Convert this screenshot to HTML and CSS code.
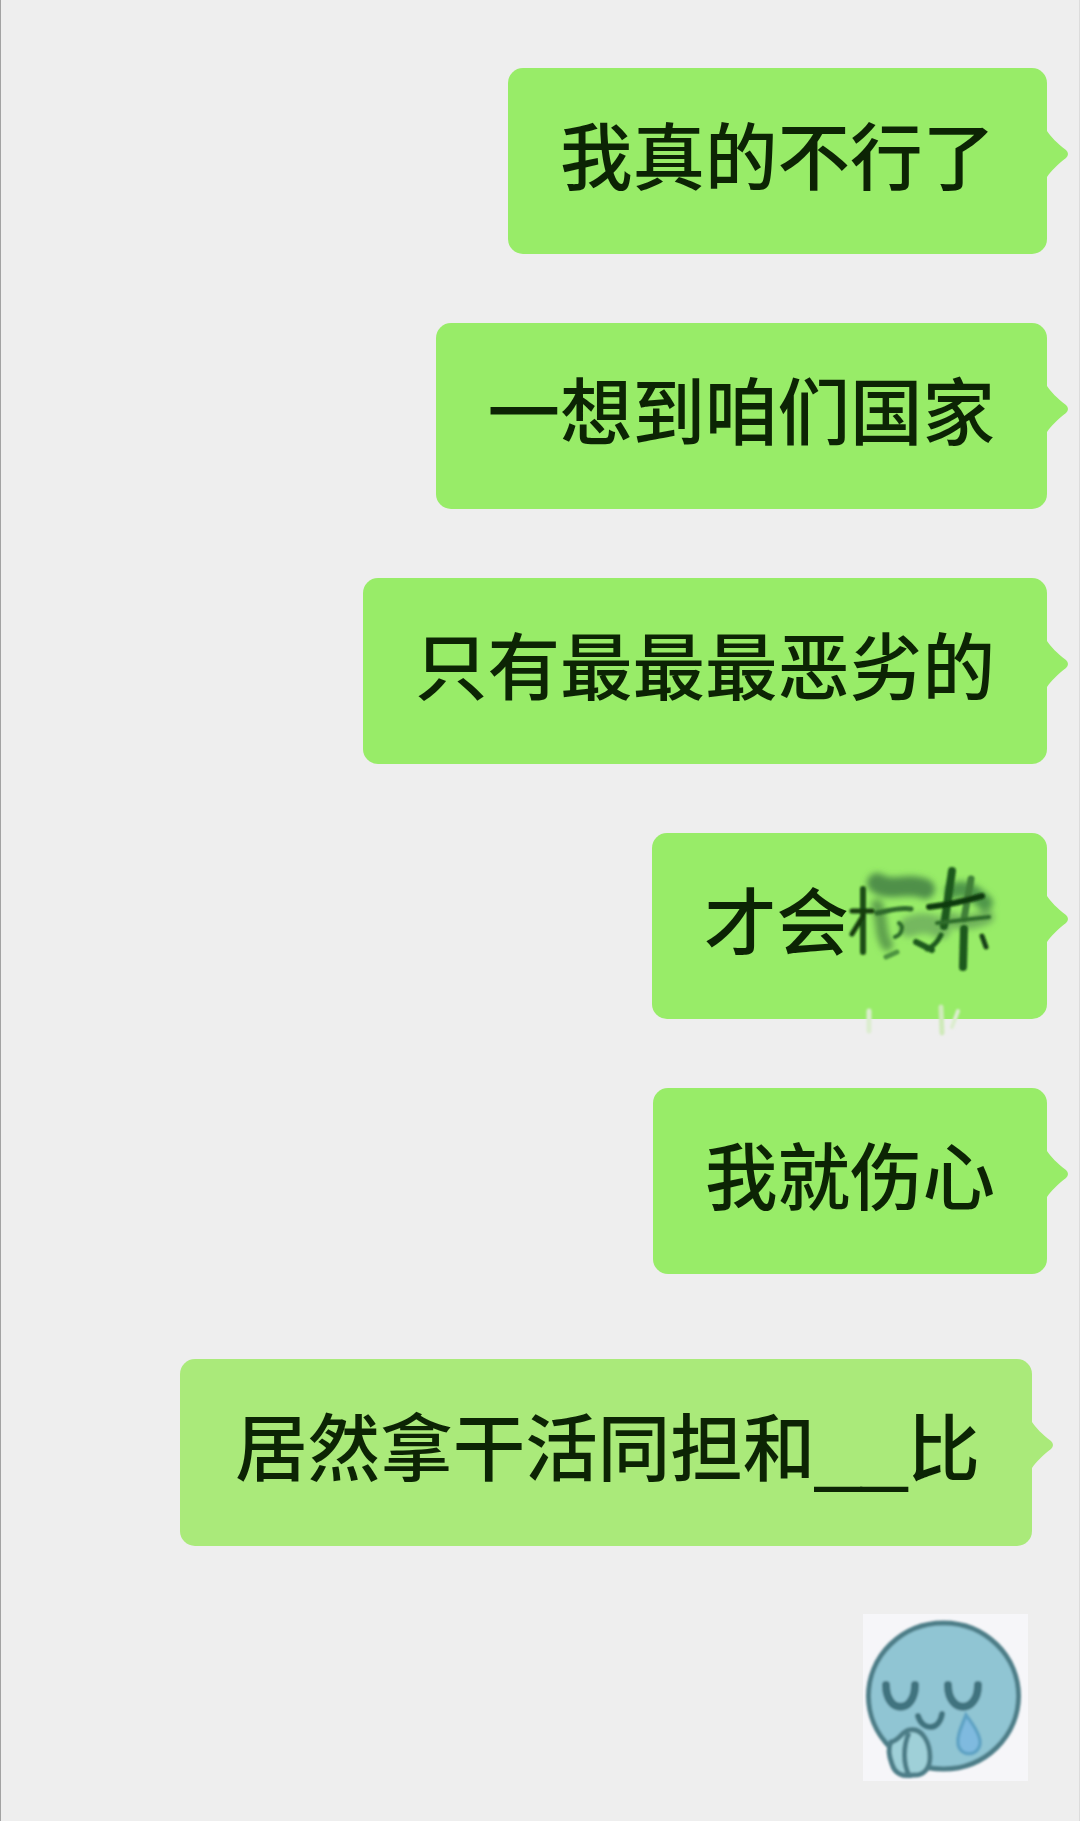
FILE: index.html
```html
<!DOCTYPE html>
<html lang="zh-CN">
<head>
  <meta charset="UTF-8" />
  <title>聊天记录</title>
  <link rel="stylesheet" href="styles.css">
</head>
<body>

  <div class="chat">
    <div class="bubble">我真的不行了</div>
    <div class="bubble">一想到咱们国家</div>
    <div class="bubble">只有最最最恶劣的</div>
    <div class="bubble">才会<svg class="smudge" width="146" height="72" viewBox="0 0 146 72" aria-hidden="true">
        <defs>
          <filter id="soft" x="-30%" y="-30%" width="160%" height="160%"><feGaussianBlur stdDeviation="3" /></filter>
          <filter id="edge" x="-30%" y="-30%" width="160%" height="160%"><feGaussianBlur stdDeviation="0.8" /></filter>
        </defs>
        <g filter="url(#soft)" fill="none" stroke-linecap="round">
          <path d="M28 -2 C42 8 60 -4 76 4" stroke="#4f9048" stroke-width="20" />
          <path d="M28 20 C34 34 30 48 38 60" stroke="#5fa24e" stroke-width="12" />
          <path d="M60 42 C72 36 82 38 92 44" stroke="#74b85e" stroke-width="20" />
          <path d="M104 6 C116 0 128 10 136 18" stroke="#4f9848" stroke-width="16" />
          <path d="M100 34 C112 40 124 38 138 32" stroke="#6fb25a" stroke-width="14" />
        </g>
        <g filter="url(#edge)" fill="none" stroke-linecap="round">
          <path d="M14 4 L14 67" stroke="#1d4f18" stroke-width="6" />
          <path d="M3 26 L23 26" stroke="#123d10" stroke-width="5" />
          <path d="M3 49 L14 31" stroke="#123d10" stroke-width="5" />
          <path d="M28 28 C40 26 50 22 62 24" stroke="#2f6a2a" stroke-width="5" />
          <path d="M50 38 C56 42 52 50 46 52" stroke="#2f6d2c" stroke-width="4" />
          <path d="M103 -14 L95 41" stroke="#1f5a1e" stroke-width="8" />
          <path d="M122 -6 L115 34" stroke="#3f8038" stroke-width="7" />
          <path d="M80 22 C98 20 116 16 133 11" stroke="#0f3a0e" stroke-width="6" />
          <path d="M88 38 C104 36 122 34 140 32" stroke="#2f6d2c" stroke-width="4" />
          <path d="M115 44 L114 82" stroke="#1d5a1c" stroke-width="8" />
          <path d="M133 51 L137 62" stroke="#143f12" stroke-width="5" />
          <path d="M67 57 L83 65" stroke="#1d5a1c" stroke-width="6" />
          <path d="M92 50 C88 58 84 62 78 64" stroke="#1d5a1c" stroke-width="5" />
          <path d="M37 72 L48 67" stroke="#4d9440" stroke-width="5" />
          <path d="M20 126 L20 146" stroke="#dcedcf" stroke-width="5" />
          <path d="M92 122 L93 148" stroke="#cfeaba" stroke-width="5" />
          <path d="M109 126 L103 142" stroke="#dcedcf" stroke-width="4" />
        </g>
      </svg></div>
    <div class="bubble">我就伤心</div>
    <div class="bubble bubble-pale">居然拿干活同担和<span class="blank">__</span>比</div>

    <svg class="sticker" width="165" height="167" viewBox="0 0 165 167" role="img" aria-label="流泪表情">
      <defs>
        <filter id="fuzz" x="-5%" y="-5%" width="110%" height="110%"><feGaussianBlur stdDeviation="0.9" /></filter>
      </defs>
      <rect width="165" height="167" fill="#f6f6f9" />
      <g filter="url(#fuzz)">
        <ellipse cx="80.5" cy="82" rx="75" ry="73" fill="#90c5d3" stroke="#4d7e88" stroke-width="5" />
        <g fill="none" stroke="#41737f" stroke-width="8" stroke-linecap="round">
          <path d="M23 71 C23 100 52 100 52 71" />
          <path d="M85 71 C85 100 115 100 115 71" />
          <path d="M55 102 C60 117 76 117 79 100" stroke-width="6" />
        </g>
        <path d="M103 101 C96 118 94 124 95 130 C97 143 115 143 117 130 C118 122 110 110 103 101 Z" fill="#7fbadf" stroke="#5ea3c4" stroke-width="3.5" />
        <path d="M28 128 C37 126 38 118 46 116 C60 113 67 130 67 143 C67 155 60 162 50 161 C40 163 32 160 29 150 C26 142 25 134 28 128 Z" fill="#9fd0d8" stroke="#4d7e88" stroke-width="5" />
        <path d="M46 119 C40 132 40 150 46 161" fill="none" stroke="#4d7e88" stroke-width="5" />
      </g>
    </svg>
  </div>

</body>
</html>
```
FILE: styles.css
```css
* {
  box-sizing: border-box;
}

body {
  margin: 0;
  background-color: #eeeeee;
  color: #0c2404;
  font-family: "Noto Sans CJK SC", "Liberation Sans", sans-serif;
  font-weight: 500;
}

.chat {
  display: flex;
  flex-direction: column;
  align-items: flex-end;
  height: 1821px;
  padding: 68px 32px 0 0;
  border-left: 1px solid #a2a2a2;
  border-right: 1px solid #dcdcdc;
  overflow: hidden;
}

.bubble {
  position: relative;
  padding: 42px 52px 58px;
  margin-bottom: 69px;
  border-radius: 15px;
  background-color: #98ec68;
  font-size: 72.5px;
  line-height: 86px;
  white-space: nowrap;
}

/* tail on the right edge */
.bubble::after {
  content: "";
  position: absolute;
  top: 63px;
  left: 100%;
  width: 23px;
  height: 46px;
  background-color: inherit;
  clip-path: path("M0 0 C4 6 10 12 19 19 Q23 23 19 27 C10 34 4 40 0 46 Z");
}

.bubble-pale {
  margin-top: 16px;
  margin-right: 15px;
  margin-bottom: 68px;
  padding-left: 55px;
  background-color: #aaea7a;
}

.blank {
  font-family: "Liberation Sans", sans-serif;
  font-size: 83px;
  line-height: 1;
}

.smudge {
  overflow: visible;
  vertical-align: -8px;
}

.sticker {
  margin-right: 19px;
}
```
